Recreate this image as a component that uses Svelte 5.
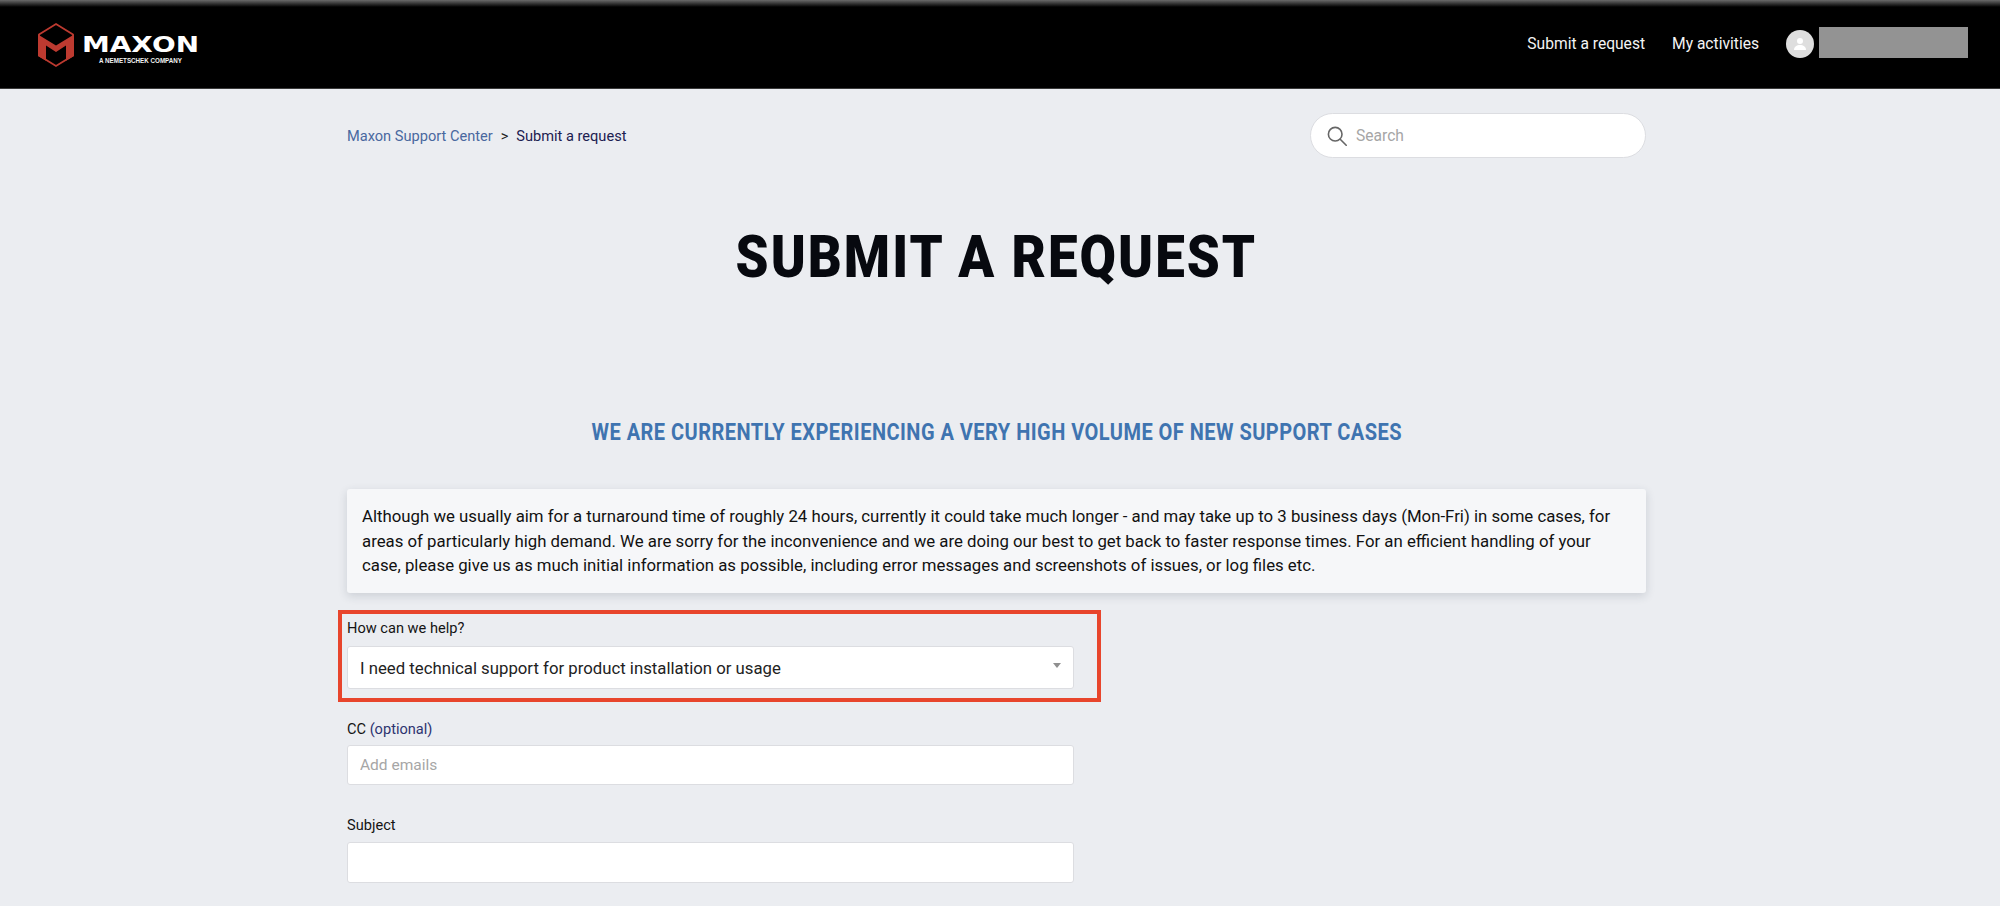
<script>
  const brandRed = '#bd3a30';
</script>

<header class="top">
  <a class="logo" href="#home" aria-label="Maxon">
    <svg width="170" height="50" viewBox="0 0 170 50">
      <polygon points="18,1 35,11.500 35,32.500 18,43 1,32.500 1,11.500" fill="none" stroke={brandRed} stroke-width="1.800" />
      <polygon points="0,11.500 18,22.500 36,11.500 36,33 28,37.800 28,22.500 18,29 8,22.500 8,37.800 0,33" fill={brandRed} />
      <text class="wordmark" x="44" y="29" textLength="117" lengthAdjust="spacingAndGlyphs">MAXON</text>
      <text class="tagline" x="61" y="40" textLength="83" lengthAdjust="spacingAndGlyphs">A NEMETSCHEK COMPANY</text>
    </svg>
  </a>
  <nav class="nav">
    <a href="#new">Submit a request</a>
    <a href="#activities">My activities</a>
    <span class="user">
      <span class="avatar">
        <svg width="14" height="14" viewBox="0 0 14 14">
          <circle cx="7" cy="4" r="3" fill="#fff" />
          <path d="M1 13c0-3.400 2.800-5 6-5s6 1.600 6 5z" fill="#fff" />
        </svg>
      </span>
      <span class="redacted"></span>
    </span>
  </nav>
</header>

<main class="page">
  <div class="crumbs">
    <div class="trail">
      <a href="#center">Maxon Support Center</a>
      <span class="sep">&gt;</span>
      <span class="current">Submit a request</span>
    </div>
    <label class="search">
      <svg width="20" height="20" viewBox="0 0 20 20" fill="none" stroke="#666" stroke-width="1.600">
        <circle cx="8.200" cy="8.200" r="6.800" />
        <path d="M13.200 13.200L19.200 19.200" stroke-linecap="round" />
      </svg>
      <input type="text" placeholder="Search" />
    </label>
  </div>

  <h1><span>SUBMIT A REQUEST</span></h1>
  <h2><span>WE ARE CURRENTLY EXPERIENCING A VERY HIGH VOLUME OF NEW SUPPORT CASES</span></h2>

  <div class="notice">
    Although we usually aim for a turnaround time of roughly 24 hours, currently it could take much longer - and may take up to 3 business days (Mon-Fri) in some cases, for areas of particularly high demand. We are sorry for the inconvenience and we are doing our best to get back to faster response times. For an efficient handling of your case, please give us as much initial information as possible, including error messages and screenshots of issues, or log files etc.
  </div>

  <section class="highlight">
    <div class="field-label first">How can we help?</div>
    <div class="select">
      <span>I need technical support for product installation or usage</span>
      <i class="caret"></i>
    </div>
  </section>

  <div class="field-label cc">CC <span class="optional">(optional)</span></div>
  <input class="box tall-40" type="text" placeholder="Add emails" />

  <div class="field-label subject">Subject</div>
  <input class="box tall-41" type="text" />
</main>

<style>
  :global(html), :global(body) {
    margin: 0;
    height: 906px;
    overflow: hidden;
    background: #ebedf1;
  }
  * { box-sizing: border-box; }
  .top, .page, input { font-family: Roboto, "Liberation Sans", sans-serif; }

  .top {
    height: 89px;
    display: flex;
    align-items: center;
    justify-content: space-between;
    padding: 0 32px 0 38px;
    background: linear-gradient(#6a6a6a 0, #000 7px);
    border-bottom: 1px solid #3a3a3a;
  }
  .logo { display: block; height: 50px; margin-top: 8px; }
  .logo svg { display: block; overflow: visible; }
  .wordmark { font: 700 21px "DejaVu Sans", sans-serif; fill: #fff; }
  .tagline { font: 700 7px "Liberation Sans", sans-serif; fill: #f2f2f2; }

  .nav { display: flex; align-items: center; }
  .nav a {
    color: #f4f4f4;
    font-size: 15.600px;
    text-decoration: none;
    margin-right: 27px;
  }
  .user { display: flex; align-items: center; gap: 5px; }
  .avatar {
    width: 28px;
    height: 28px;
    border-radius: 50%;
    background: #dedede;
    display: flex;
    align-items: center;
    justify-content: center;
  }
  .redacted { width: 149px; height: 31px; margin-bottom: 3px; background: #939393; }

  .page { width: 1299px; margin-left: 347px; padding-top: 24px; color: #111; }

  .crumbs { display: flex; justify-content: space-between; align-items: center; height: 45px; }
  .trail { font-size: 14.600px; display: flex; gap: 8px; }
  .trail a { color: #49689f; text-decoration: none; }
  .sep { color: #222; }
  .current { color: #1c2050; }

  .search {
    width: 336px;
    height: 45px;
    display: flex;
    align-items: center;
    gap: 9px;
    padding-left: 16px;
    background: #fff;
    border: 1px solid #dcdde1;
    border-radius: 23px;
  }
  .search input {
    flex: 1;
    min-width: 0;
    border: 0;
    outline: 0;
    padding: 0;
    font-size: 15.600px;
    background: transparent;
  }
  input::placeholder { color: #a6a6a6; opacity: 1; }

  h1, h2 { text-align: center; }
  h1 span, h2 span { display: inline-block; white-space: nowrap; }
  h1 {
    margin: 64px 0 0;
    height: 70px;
    line-height: 70px;
    font-size: 60px;
    font-weight: 900;
    color: #07090f;
  }
  h1 span { letter-spacing: 2.300px; transform: scaleX(0.88); }
  h2 {
    margin: 126px 0 0;
    height: 30px;
    line-height: 30px;
    font-size: 23px;
    font-weight: 700;
    color: #3f74b0;
  }
  h2 span { letter-spacing: 0.530px; transform: scaleX(0.87); }
  .notice {
    margin-top: 41px;
    height: 104px;
    padding: 15px 20px 15px 15px;
    font-size: 16.800px;
    line-height: 24.600px;
    background: #f6f7f9;
    border-radius: 3px;
    box-shadow: 0 3px 10px rgba(40, 50, 70, 0.16);
  }

  .highlight {
    width: 763px;
    margin: 17px 0 0 -9px;
    padding: 4px 23px 9px 5px;
    border: 4px solid #e8452c;
  }
  .field-label { font-size: 14.600px; line-height: 20px; color: #141414; }
  .field-label.cc { margin-top: 17px; }
  .field-label.subject { margin-top: 30px; }
  .optional { color: #2d3470; }

  .select {
    position: relative;
    height: 43px;
    margin-top: 8px;
    padding: 0 12px;
    display: flex;
    align-items: center;
    font-size: 16.750px;
    color: #222;
    background: #fff;
    border: 1px solid #dcdde1;
    border-radius: 3px;
  }
  .caret {
    position: absolute;
    right: 12px;
    top: 16px;
    width: 0;
    height: 0;
    border-left: 4.500px solid transparent;
    border-right: 4.500px solid transparent;
    border-top: 5px solid #8f8f8f;
  }

  .box {
    display: block;
    width: 727px;
    padding: 0 12px;
    font-size: 15.500px;
    background: #fff;
    border: 1px solid #dcdde1;
    border-radius: 3px;
    outline: 0;
  }
  .tall-40 { height: 40px; margin-top: 6px; }
  .tall-41 { height: 41px; margin-top: 7px; }
</style>
